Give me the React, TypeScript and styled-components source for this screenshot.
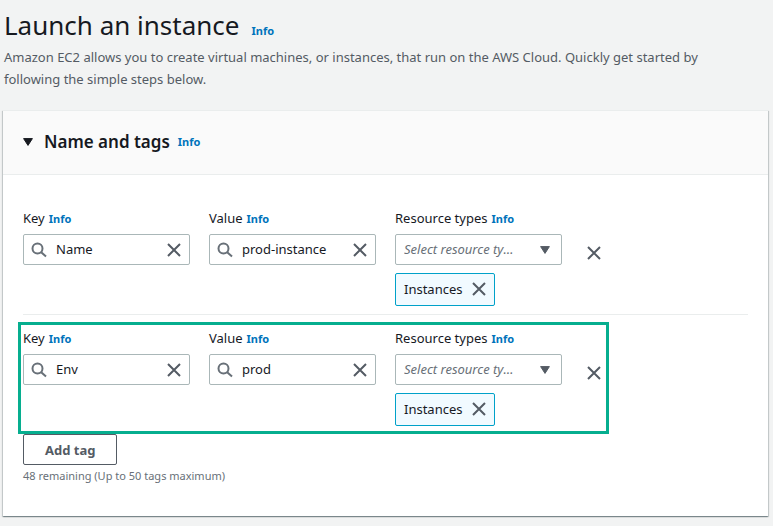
import React, { useId, useState } from "react";
import styled, { createGlobalStyle } from "styled-components";

const GlobalStyle = createGlobalStyle`
  *, *::before, *::after { box-sizing: border-box; }
  body {
    margin: 0;
    background: #f2f3f3;
    color: #16191f;
    font-family: "Noto Sans", "Open Sans", sans-serif;
    font-size: 13px;
    line-height: 22px;
  }
  button, input, select { font: inherit; color: inherit; }
`;

const Page = styled.main`
  padding: 7px 5px 9px 3px;
`;

const PageHeader = styled.header`
  padding: 0 0 20px 1px;
`;

const TitleLine = styled.div`
  display: flex;
  align-items: baseline;
  gap: 12px;
`;

const PageTitle = styled.h1`
  margin: 0;
  font-size: 26px;
  line-height: 36px;
  font-weight: 400;
`;

const Description = styled.p`
  margin: 3px 0 0;
  max-width: 740px;
  color: #545b64;
`;

const InfoLink = styled.a`
  color: #0073bb;
  font-size: 11px;
  line-height: 16px;
  font-weight: 700;
  text-decoration: none;
  &:hover { text-decoration: underline; }
`;

const Panel = styled.section`
  background: #fff;
  border-top: 1px solid #eaeded;
  box-shadow: 0 1px 1px 0 rgba(0, 28, 36, 0.3), 1px 1px 1px 0 rgba(0, 28, 36, 0.15),
    -1px 1px 1px 0 rgba(0, 28, 36, 0.15);
`;

const PanelHeader = styled.div`
  display: flex;
  align-items: baseline;
  gap: 8px;
  padding: 19px 20px 20px;
  background: #fafafa;
  border-bottom: 1px solid #eaeded;
`;

const PanelTitle = styled.h2`
  margin: 0;
  font-size: 17px;
  line-height: 24px;
  font-weight: 600;
`;

const ToggleButton = styled.button`
  display: flex;
  align-items: center;
  gap: 11px;
  padding: 0;
  border: 0;
  background: none;
  cursor: pointer;
`;

const PanelBody = styled.div`
  padding: 32px 20px 30px;
`;

const TagRow = styled.div<{ $highlighted?: boolean }>`
  position: relative;
  display: grid;
  grid-template-columns: repeat(4, minmax(0, 1fr));
  column-gap: 19px;
  padding-bottom: 8px;

  & + & {
    margin-top: 12px;
  }
  &:not(:last-of-type) {
    border-bottom: 1px solid #eaeded;
  }
  ${(p) =>
    p.$highlighted &&
    `&::after {
      content: "";
      position: absolute;
      top: -5px;
      bottom: 0;
      left: -5px;
      width: calc(75% + 47px);
      border: 3px solid #06ae8f;
      pointer-events: none;
    }`}
`;

const Field = styled.div`
  display: flex;
  flex-direction: column;
  align-items: stretch;
`;

const LabelLine = styled.div`
  display: flex;
  align-items: baseline;
  gap: 4px;
  margin-bottom: 5px;
  white-space: nowrap;
`;

const Control = styled.div`
  display: flex;
  align-items: center;
  height: 31px;
  padding: 0 7px;
  border: 1px solid #aab7b8;
  border-radius: 2px;
  background: #fff;
  &:focus-within { border-color: #00a1c9; }
`;

const TextInput = styled.input`
  flex: 1;
  min-width: 0;
  padding: 0 9px 2px;
  border: 0;
  outline: 0;
  background: none;
`;

const SelectInput = styled.select`
  flex: 1;
  min-width: 0;
  padding: 0 0 2px;
  border: 0;
  outline: 0;
  background: none;
  appearance: none;
  color: #687078;
  font-style: italic;
  text-overflow: ellipsis;
`;

const SelectControl = styled(Control)`
  gap: 20px;
  padding: 0 11px 0 8px;
`;

const IconButton = styled.button`
  display: flex;
  padding: 0;
  border: 0;
  background: none;
  color: #545b64;
  cursor: pointer;
`;

const RemoveCell = styled.div`
  padding: 38px 0 0 5px;
`;

const Token = styled.span`
  display: flex;
  align-items: center;
  align-self: flex-start;
  gap: 8px;
  height: 33px;
  margin-top: 8px;
  padding: 0 7px 2px 8px;
  border: 1px solid #00a1c9;
  border-radius: 2px;
  background: #f1faff;
`;

const AddButton = styled.button`
  display: block;
  height: 31px;
  padding: 0 21px;
  border: 1px solid #545b64;
  border-radius: 2px;
  background: #fff;
  color: #545b64;
  font-weight: 700;
  cursor: pointer;
`;

const Hint = styled.p`
  margin: 1px 0 0;
  color: #687078;
  font-size: 11px;
  line-height: 20px;
`;

const CloseIcon = () => (
  <svg width="16" height="16" viewBox="0 0 16 16" fill="none" stroke="currentColor" strokeWidth="2" aria-hidden="true">
    <path d="M2 2l12 12M14 2L2 14" />
  </svg>
);

const SearchIcon = () => (
  <svg width="16" height="16" viewBox="0 0 16 16" fill="none" stroke="#687078" strokeWidth="2" aria-hidden="true">
    <circle cx="6.5" cy="6.5" r="5" />
    <path d="M10.2 10.2L15 14.6" />
  </svg>
);

const CaretIcon = ({ color }: { color: string }) => (
  <svg width="10" height="8" viewBox="0 0 10 8" fill={color} stroke={color} strokeLinejoin="round" aria-hidden="true">
    <path d="M.6 .6h8.8L5 7.4z" />
  </svg>
);

const Info = () => <InfoLink href="#info">Info</InfoLink>;

function SearchField({ label, initial }: { label: string; initial: string }) {
  const id = useId();
  const [value, setValue] = useState(initial);
  return (
    <Field>
      <LabelLine>
        <label htmlFor={id}>{label}</label>
        <Info />
      </LabelLine>
      <Control>
        <SearchIcon />
        <TextInput id={id} type="text" value={value} onChange={(e) => setValue(e.target.value)} />
        <IconButton type="button" aria-label={`Clear ${label}`} onClick={() => setValue("")}>
          <CloseIcon />
        </IconButton>
      </Control>
    </Field>
  );
}

function ResourceField() {
  const id = useId();
  return (
    <Field>
      <LabelLine>
        <label htmlFor={id}>Resource types</label>
        <Info />
      </LabelLine>
      <SelectControl>
        <SelectInput id={id}>
          <option>Select resource types</option>
        </SelectInput>
        <CaretIcon color="#545b64" />
      </SelectControl>
      <Token>
        Instances
        <IconButton type="button" aria-label="Remove Instances">
          <CloseIcon />
        </IconButton>
      </Token>
    </Field>
  );
}

const tags = [
  { name: "Name", value: "prod-instance", highlighted: false },
  { name: "Env", value: "prod", highlighted: true },
];

export default function App() {
  const [open, setOpen] = useState(true);
  return (
    <>
      <GlobalStyle />
      <Page>
        <PageHeader>
          <TitleLine>
            <PageTitle>Launch an instance</PageTitle>
            <Info />
          </TitleLine>
          <Description>
            Amazon EC2 allows you to create virtual machines, or instances, that run on the AWS Cloud. Quickly get
            started by following the simple steps below.
          </Description>
        </PageHeader>
        <Panel>
          <PanelHeader>
            <PanelTitle>
              <ToggleButton type="button" aria-expanded={open} onClick={() => setOpen(!open)}>
                <CaretIcon color="#16191f" />
                Name and tags
              </ToggleButton>
            </PanelTitle>
            <Info />
          </PanelHeader>
          {open && (
            <PanelBody>
              <div>
                {tags.map((tag) => (
                  <TagRow key={tag.name} $highlighted={tag.highlighted}>
                    <SearchField label="Key" initial={tag.name} />
                    <SearchField label="Value" initial={tag.value} />
                    <ResourceField />
                    <RemoveCell>
                      <IconButton type="button" aria-label={`Remove tag ${tag.name}`}>
                        <CloseIcon />
                      </IconButton>
                    </RemoveCell>
                  </TagRow>
                ))}
              </div>
              <AddButton type="button">Add tag</AddButton>
              <Hint>48 remaining (Up to 50 tags maximum)</Hint>
            </PanelBody>
          )}
        </Panel>
      </Page>
    </>
  );
}
